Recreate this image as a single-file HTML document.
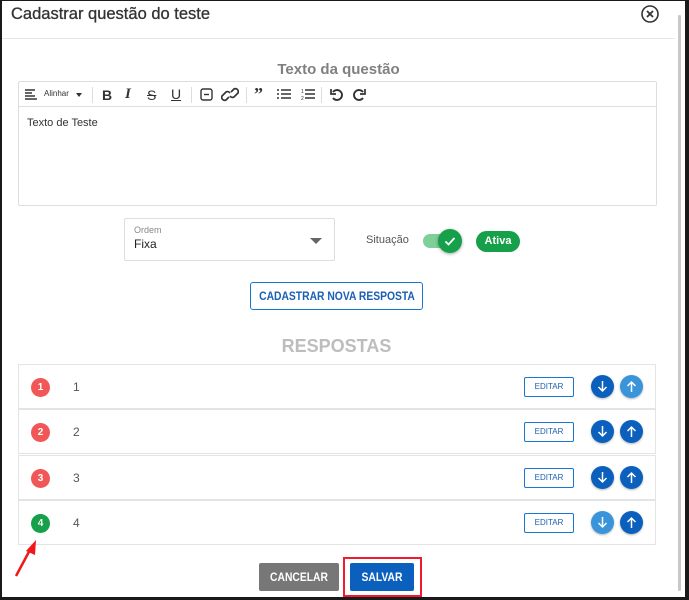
<!DOCTYPE html>
<html><head><meta charset="utf-8"><style>
*{box-sizing:border-box;margin:0;padding:0}
body{width:689px;height:600px;background:#1a1a1a;position:relative;overflow:hidden;font-family:"Liberation Sans",Arial,sans-serif}
.win{position:absolute;left:2px;top:1px;width:683px;height:596px;background:#fff}
.a{position:absolute}
.tb{position:absolute;top:6px;font-size:13px;color:#333;font-weight:bold}
.sep{position:absolute;top:5px;width:1px;height:16px;background:#ddd}
.row{position:absolute;left:18px;width:638px;height:45px;border:1px solid #e4e4e4;background:#fff}
.badge{position:absolute;left:12px;top:13px;width:19px;height:19px;border-radius:50%;color:#fff;font-size:10px;font-weight:bold;text-align:center;line-height:19px}
.num{position:absolute;left:54px;top:15px;font-size:12px;color:#555}
.ed{position:absolute;left:505px;top:12px;width:50px;height:20px;border:1px solid #1976d2;border-radius:2px;font-size:8px;color:#1a5fb4;text-align:center;line-height:18px}
.cb{position:absolute;top:10px;width:23px;height:23px;border-radius:50%;box-shadow:0 1px 2px rgba(0,0,0,.3)}
.cb svg{position:absolute;left:5px;top:5px}
.nw{white-space:nowrap;position:absolute;left:50%;top:0;transform:translateX(-50%) scaleX(.86)}
</style></head><body>
<div class="win">
<div class="a" style="left:9px;top:4px;font-size:16.5px;color:#333;-webkit-text-stroke:.3px #333">Cadastrar questão do teste</div>
<svg class="a" style="left:638px;top:3px" width="20" height="20"><circle cx="10" cy="10" r="8" fill="none" stroke="#333" stroke-width="1.6"/><path d="M7 7L13 13M13 7L7 13" stroke="#333" stroke-width="1.8"/></svg>
<div class="a" style="left:676px;top:14px;width:3px;height:576px;background:#c8c8c8;border-radius:2px"></div>
<div class="a" style="left:0;top:37px;width:673px;height:1px;background:#e6e6e6"></div>
<div class="a" style="left:0;width:673px;top:60px;text-align:center;font-size:15px;font-weight:bold;color:#808080">Texto da questão</div>
<div class="a" style="left:16px;top:80px;width:639px;height:125px;border:1px solid #ddd;border-radius:2px">
 <div class="a" style="left:0;top:0;width:637px;height:25px;border-bottom:1px solid #ddd">
  <svg class="a" style="left:6px;top:7px" width="12" height="11"><path d="M0 1H10M0 4H7M0 7H10M0 10H12" stroke="#333" stroke-width="1.4"/></svg>
  <div class="a" style="left:25px;top:7px;font-size:8px;color:#333">Alinhar</div>
  <div class="a" style="left:57px;top:11px;border:3px solid transparent;border-top:4px solid #333"></div>
  <div class="sep" style="left:73px"></div>
  <div class="tb" style="left:83px;font-size:14px;top:5px">B</div>
  <div class="tb" style="left:106px;font-style:italic;font-family:'Liberation Serif',serif;font-size:15px;top:4px">I</div>
  <div class="tb" style="left:128px;text-decoration:line-through;font-weight:normal;font-size:14px;top:5px">S</div>
  <div class="tb" style="left:152px;text-decoration:underline;font-weight:normal;font-size:14px;top:4px">U</div>
  <div class="sep" style="left:172px"></div>
  <svg class="a" style="left:181px;top:6px" width="13" height="13"><rect x="1" y="1" width="11" height="11" rx="2" fill="none" stroke="#333" stroke-width="1.4"/><path d="M4 6.5H9" stroke="#333" stroke-width="1.4"/></svg>
  <svg class="a" style="left:202px;top:5px" width="18" height="15"><path d="M8 10L5 13A3 3 0 0 1 1 9L5 5A3 3 0 0 1 9 6M10 5L13 2A3 3 0 0 1 17 6L13 10A3 3 0 0 1 9 9" fill="none" stroke="#333" stroke-width="1.7"/></svg>
  <div class="sep" style="left:227px"></div>
  <div class="tb" style="left:235px;font-size:18px;top:2px;font-family:'Liberation Serif',serif">”</div>
  <svg class="a" style="left:258px;top:7px" width="14" height="11"><path d="M0 1H2M4 1H14M0 5H2M4 5H14M0 9H2M4 9H14" stroke="#333" stroke-width="1.6"/></svg>
  <svg class="a" style="left:282px;top:6px" width="14" height="13"><path d="M4 2H14M4 6H14M4 10H14" stroke="#333" stroke-width="1.6"/><text x="0" y="5" font-size="5" fill="#333">1</text><text x="0" y="12" font-size="5" fill="#333">2</text></svg>
  <div class="sep" style="left:302px"></div>
  <svg class="a" style="left:311px;top:6px" width="13" height="13"><path d="M3 4A5 5 0 1 1 3 10" fill="none" stroke="#333" stroke-width="1.9"/><path d="M1 1V6H6" fill="none" stroke="#333" stroke-width="1.7"/></svg>
  <svg class="a" style="left:334px;top:6px" width="13" height="13"><path d="M10 4A5 5 0 1 0 10 10" fill="none" stroke="#333" stroke-width="1.9"/><path d="M12 1V6H7" fill="none" stroke="#333" stroke-width="1.7"/></svg>
 </div>
 <div class="a" style="left:8px;top:35px;font-size:11px;color:#333">Texto de Teste</div>
</div>
<div class="a" style="left:122px;top:217px;width:211px;height:43px;border:1px solid #ddd;border-radius:2px">
 <div class="a" style="left:9px;top:6px;font-size:9px;color:#888">Ordem</div>
 <div class="a" style="left:9px;top:18px;font-size:12px;color:#222">Fixa</div>
 <div class="a" style="left:185px;top:19px;border:6px solid transparent;border-top:6px solid #666;border-bottom:0"></div>
</div>
<div class="a" style="left:364px;top:233px;font-size:11px;color:#555">Situação</div>
<div class="a" style="left:421px;top:233px;width:30px;height:14px;border-radius:7px;background:#7fcf99"></div>
<div class="a" style="left:436px;top:228px;width:24px;height:24px;border-radius:50%;background:#16a04a;box-shadow:0 1px 3px rgba(0,0,0,.35)"><svg width="24" height="24"><path d="M7.5 12.5L10.5 15.5L16.5 9" fill="none" stroke="#fff" stroke-width="1.8"/></svg></div>
<div class="a" style="left:474px;top:230px;width:44px;height:21px;border-radius:11px;background:#16a04a;color:#fff;font-size:11px;font-weight:bold;text-align:center;line-height:21px">Ativa</div>
<div class="a" style="left:248px;top:281px;width:173px;height:28px;border:1px solid #1976d2;border-radius:3px;color:#1a5fb4;font-size:12px;font-weight:bold;line-height:26px"><span class="nw">CADASTRAR NOVA RESPOSTA</span></div>
<div class="a" style="left:0;width:669px;top:335px;text-align:center;font-size:18px;font-weight:bold;color:#bdbdbd">RESPOSTAS</div>

<div class="row" style="top:363px;left:16px"><div class="badge" style="background:#f25757">1</div><div class="num">1</div><div class="ed">EDITAR</div>
<div class="cb" style="left:572px;background:#0b5fbd"><svg width="13" height="13"><path d="M6.5 1V11M2.5 7L6.5 11L10.5 7" fill="none" stroke="#fff" stroke-width="1.5"/></svg></div>
<div class="cb" style="left:601px;background:#3a94d9"><svg width="13" height="13"><path d="M6.5 12V2M2.5 6L6.5 2L10.5 6" fill="none" stroke="#fff" stroke-width="1.5"/></svg></div></div>
<div class="row" style="top:408px;left:16px"><div class="badge" style="background:#f25757">2</div><div class="num">2</div><div class="ed">EDITAR</div>
<div class="cb" style="left:572px;background:#0b5fbd"><svg width="13" height="13"><path d="M6.5 1V11M2.5 7L6.5 11L10.5 7" fill="none" stroke="#fff" stroke-width="1.5"/></svg></div>
<div class="cb" style="left:601px;background:#0b5fbd"><svg width="13" height="13"><path d="M6.5 12V2M2.5 6L6.5 2L10.5 6" fill="none" stroke="#fff" stroke-width="1.5"/></svg></div></div>
<div class="row" style="top:454px;left:16px"><div class="badge" style="background:#f25757">3</div><div class="num">3</div><div class="ed">EDITAR</div>
<div class="cb" style="left:572px;background:#0b5fbd"><svg width="13" height="13"><path d="M6.5 1V11M2.5 7L6.5 11L10.5 7" fill="none" stroke="#fff" stroke-width="1.5"/></svg></div>
<div class="cb" style="left:601px;background:#0b5fbd"><svg width="13" height="13"><path d="M6.5 12V2M2.5 6L6.5 2L10.5 6" fill="none" stroke="#fff" stroke-width="1.5"/></svg></div></div>
<div class="row" style="top:499px;left:16px"><div class="badge" style="background:#16a04a">4</div><div class="num">4</div><div class="ed">EDITAR</div>
<div class="cb" style="left:572px;background:#3a94d9"><svg width="13" height="13"><path d="M6.5 1V11M2.5 7L6.5 11L10.5 7" fill="none" stroke="#fff" stroke-width="1.5"/></svg></div>
<div class="cb" style="left:601px;background:#0b5fbd"><svg width="13" height="13"><path d="M6.5 12V2M2.5 6L6.5 2L10.5 6" fill="none" stroke="#fff" stroke-width="1.5"/></svg></div></div>

<svg class="a" style="left:0;top:530px" width="50" height="50"><path d="M14 45L29 17" stroke="#f01818" stroke-width="2.5"/><path d="M34 9L24 20L33 24Z" fill="#f01818"/></svg>
<div class="a" style="left:257px;top:562px;width:80px;height:28px;background:#777;border-radius:2px;color:#fff;font-size:12px;font-weight:bold;line-height:28px"><span class="nw">CANCELAR</span></div>
<div class="a" style="left:341px;top:556px;width:79px;height:40px;border:2px solid #ee1c2e"></div>
<div class="a" style="left:348px;top:562px;width:64px;height:28px;background:#0b5fbd;border-radius:2px;color:#fff;font-size:12px;font-weight:bold;line-height:28px"><span class="nw">SALVAR</span></div>
</div>
</body></html>
